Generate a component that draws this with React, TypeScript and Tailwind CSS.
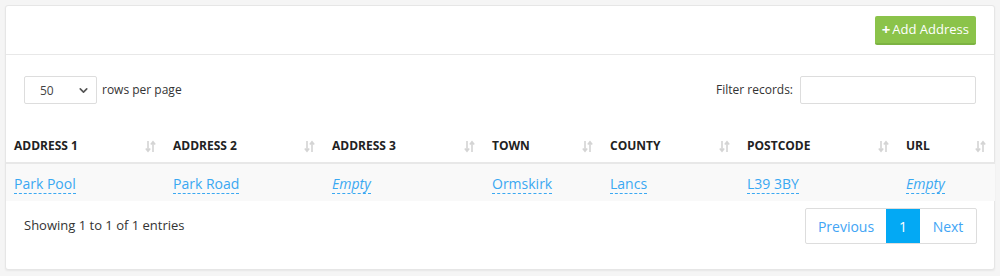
import { ChevronDown } from 'lucide-react'

const columns = [
  { label: 'Address 1', w: 'w-[159px]' },
  { label: 'Address 2', w: 'w-[159px]' },
  { label: 'Address 3', w: 'w-[160px]' },
  { label: 'Town', w: 'w-[118px]' },
  { label: 'County', w: 'w-[137px]' },
  { label: 'Postcode', w: 'w-[159px]' },
  { label: 'URL', w: 'w-[97px]' },
]

const row = [
  { text: 'Park Pool' },
  { text: 'Park Road' },
  { text: 'Empty', empty: true },
  { text: 'Ormskirk' },
  { text: 'Lancs' },
  { text: 'L39 3BY' },
  { text: 'Empty', empty: true },
]

function SortIcon() {
  return (
    <svg width="11" height="13" viewBox="0 0 11 13" className="text-[#d4d4d4]">
      <path d="M3 1v10M0.8 8.6L3 11.2 5.2 8.6" stroke="currentColor" strokeWidth="1.6" fill="none" />
      <path d="M8 12V2M5.8 4.4L8 1.8 10.2 4.4" stroke="currentColor" strokeWidth="1.6" fill="none" />
    </svg>
  )
}

export default function App() {
  return (
    <div className="w-[1000px] h-[276px] bg-[#f5f5f5] p-[5px] font-['Open_Sans',sans-serif] text-[#333]">
      <div className="bg-white border border-[#e6e6e6] rounded-[3px] shadow-[0_1px_2px_rgba(0,0,0,0.06)] h-[265px]">
        {/* HEADER */}
        <div className="h-[49px] border-b border-[#e8e8e8] flex items-center justify-end pr-[18px] pt-[1px]">
          <button className="h-[29px] px-[7px] bg-[#8bc34a] border-b-2 border-[#7cb342] rounded-[2px] text-white text-[13px] flex items-center gap-[2px]">
            <span className="font-bold text-[15px] leading-none -mt-[1px]">+</span>
            Add Address
          </button>
        </div>

        {/* CONTROLS */}
        <div className="flex items-center justify-between px-[18px] pt-[21px] pb-[26px]">
          <div className="flex items-center gap-[5px] text-[12px]">
            <div className="w-[73px] h-[28px] border border-[#ddd] rounded-[2px] flex items-center justify-between pl-[15px] pr-[6px] text-[12px] text-[#444]">
              <span className="mt-[2px]">50</span>
              <ChevronDown size={13} strokeWidth={3} className="text-[#555]" />
            </div>
            <span>rows per page</span>
          </div>
          <div className="flex items-center gap-[7px] text-[12px]">
            <span>Filter records:</span>
            <div className="w-[176px] h-[28px] border border-[#ddd] rounded-[2px]" />
          </div>
        </div>

        {/* TABLE */}
        <table className="border-collapse table-fixed w-[988px]">
          <thead>
            <tr className="border-b-2 border-[#e8e8e8]">
              {columns.map((c, i) => (
                <th key={i} className={`${c.w} h-[33px] pl-[8px] pr-[9px] text-left`}>
                  <div className="flex items-center justify-between">
                    <span className="uppercase font-bold text-[12px] text-[#222]">{c.label}</span>
                    <SortIcon />
                  </div>
                </th>
              ))}
            </tr>
          </thead>
          <tbody>
            <tr className="bg-[#f9f9f9]">
              {row.map((c, i) => (
                <td key={i} className="h-[38px] pl-[8px] pr-[9px] pt-[1px]">
                  <span
                    className={`text-[14px] text-[#3aa8f2] border-b border-dashed border-[#3aa8f2] ${c.empty ? 'italic' : ''}`}
                  >
                    {c.text}
                  </span>
                </td>
              ))}
            </tr>
          </tbody>
        </table>

        {/* FOOTER */}
        <div className="flex items-center justify-between pl-[18px] pr-[17px] pt-[7px]">
          <span className="text-[13px] text-[#333]">Showing 1 to 1 of 1 entries</span>
          <div className="flex h-[36px] border border-[#ddd] rounded-[2px] text-[14px]">
            <span className="w-[80px] flex items-center justify-center text-[#42a5f5]">Previous</span>
            <span className="w-[34px] flex items-center justify-center bg-[#03a9f4] text-white">1</span>
            <span className="w-[56px] flex items-center justify-center text-[#42a5f5]">Next</span>
          </div>
        </div>
      </div>
    </div>
  )
}
